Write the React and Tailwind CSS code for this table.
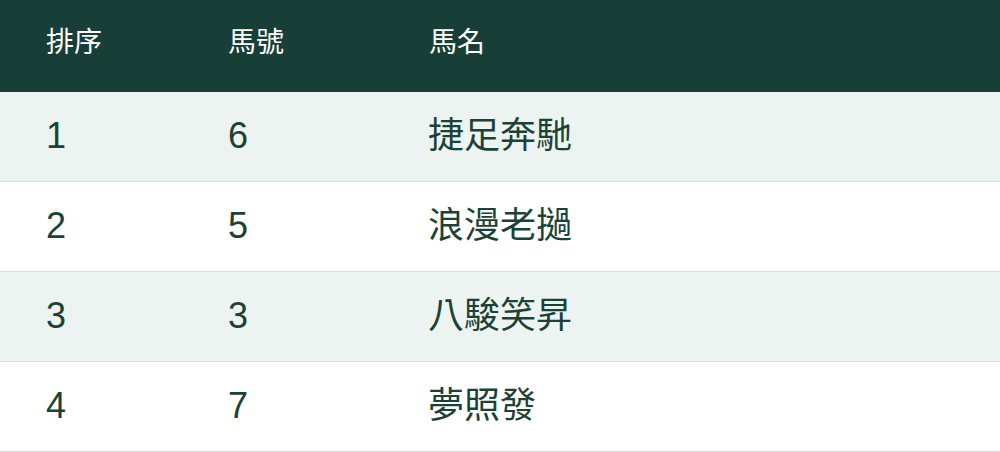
const rows = [
  { rank: '1', no: '6', name: '捷足奔馳' },
  { rank: '2', no: '5', name: '浪漫老撾' },
  { rank: '3', no: '3', name: '八駿笑昇' },
  { rank: '4', no: '7', name: '夢照發' },
];

const font = { fontFamily: '"Liberation Sans", "Noto Sans CJK TC", sans-serif' };

export default function App() {
  return (
    <div className="w-[1000px] bg-white" style={font}>
      <div className="grid grid-cols-[182px_202px_1fr] h-[92px] items-center bg-[#173f37] text-white text-[28px] leading-none">
        <div className="pl-[46px] pb-[6px]">排序</div>
        <div className="pl-[46px] pb-[6px]">馬號</div>
        <div className="pl-[45px] pb-[6px]">馬名</div>
      </div>
      {rows.map((r, i) => (
        <div
          key={r.rank}
          className={`grid grid-cols-[182px_202px_1fr] h-[90px] items-center border-b border-[#d6ddda] text-[36px] leading-none text-[#1b4237] ${i % 2 === 0 ? 'bg-[#edf3f1]' : 'bg-white'}`}
        >
          <div className="pl-[46px] pb-[2px]">{r.rank}</div>
          <div className="pl-[46px] pb-[2px]">{r.no}</div>
          <div className="pl-[44px] pb-[2px]">{r.name}</div>
        </div>
      ))}
    </div>
  );
}
